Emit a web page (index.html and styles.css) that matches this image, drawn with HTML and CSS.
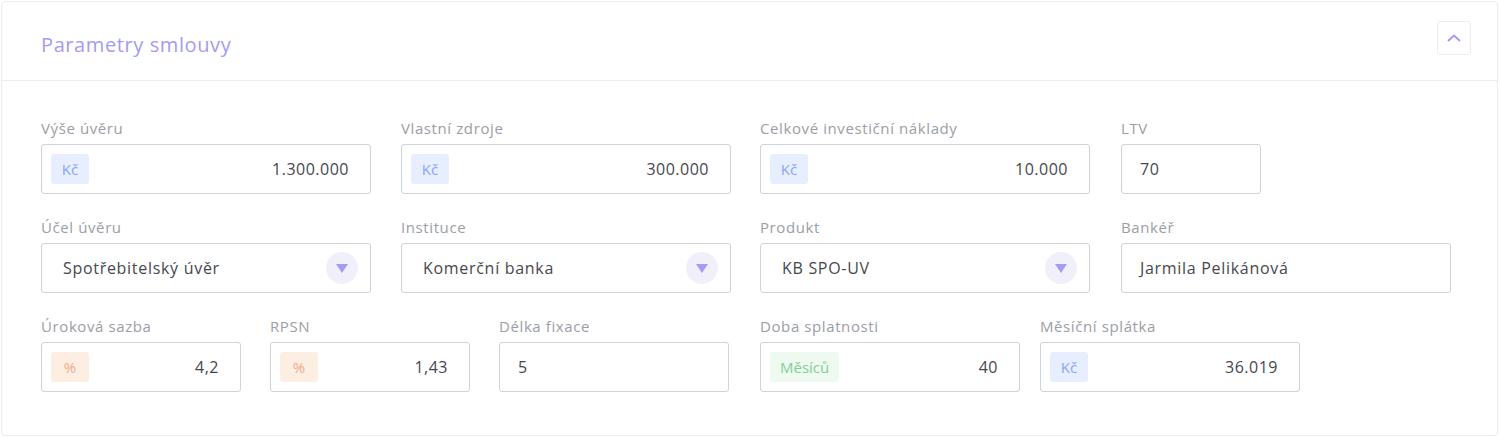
FILE: index.html
```html
<!DOCTYPE html>
<html lang="cs">
<head>
    <meta charset="UTF-8">
    <meta name="viewport" content="width=device-width, initial-scale=1.0">
    <title>Parametry smlouvy</title>
    <link rel="stylesheet" href="styles.css">
</head>
<body>
    <div class="card">
        <div class="card-head">
            <h2>Parametry smlouvy</h2>
            <button class="collapse">
                <svg width="14" height="8" viewBox="0 0 14 8"><path d="M1 7 L7 1.5 L13 7" fill="none" stroke="#a19bf3" stroke-width="2"/></svg>
            </button>
        </div>
        <div class="card-body">
            <div class="row">
                <div class="field w330">
                    <label>Výše úvěru</label>
                    <div class="input"><span class="tag blue">Kč</span><span class="value right">1.300.000</span></div>
                </div>
                <div class="field w330">
                    <label>Vlastní zdroje</label>
                    <div class="input"><span class="tag blue">Kč</span><span class="value right">300.000</span></div>
                </div>
                <div class="field w330 shift">
                    <label>Celkové investiční náklady</label>
                    <div class="input"><span class="tag blue">Kč</span><span class="value right">10.000</span></div>
                </div>
                <div class="field w140">
                    <label>LTV</label>
                    <div class="input"><span class="value">70</span></div>
                </div>
            </div>
            <div class="row">
                <div class="field w330">
                    <label>Účel úvěru</label>
                    <div class="input select"><span class="value">Spotřebitelský úvěr</span><span class="arrow"></span></div>
                </div>
                <div class="field w330">
                    <label>Instituce</label>
                    <div class="input select"><span class="value">Komerční banka</span><span class="arrow"></span></div>
                </div>
                <div class="field w330 shift">
                    <label>Produkt</label>
                    <div class="input select"><span class="value">KB SPO-UV</span><span class="arrow"></span></div>
                </div>
                <div class="field w330">
                    <label>Bankéř</label>
                    <div class="input"><span class="value">Jarmila Pelikánová</span></div>
                </div>
            </div>
            <div class="row">
                <div class="group left">
                    <div class="field w200">
                        <label>Úroková sazba</label>
                        <div class="input"><span class="tag orange">%</span><span class="value right">4,2</span></div>
                    </div>
                    <div class="field w200">
                        <label>RPSN</label>
                        <div class="input"><span class="tag orange">%</span><span class="value right">1,43</span></div>
                    </div>
                    <div class="field w230">
                        <label>Délka fixace</label>
                        <div class="input"><span class="value">5</span></div>
                    </div>
                </div>
                <div class="group">
                    <div class="field w260">
                        <label>Doba splatnosti</label>
                        <div class="input"><span class="tag green">Měsíců</span><span class="value right">40</span></div>
                    </div>
                    <div class="field w260">
                        <label>Měsíční splátka</label>
                        <div class="input"><span class="tag blue">Kč</span><span class="value right">36.019</span></div>
                    </div>
                </div>
            </div>
        </div>
    </div>
</body>
</html>
```

FILE: styles.css
```css
*{
    box-sizing: border-box;
    margin: 0;
    padding: 0;
}
body{
    background-color: #ffffff;
    font-family: "Open Sans", sans-serif;
    padding: 1px 1px 0 1px;
}
.card{
    width: 1497px;
    height: 435px;
    border: 1px solid #e9ecf4;
    border-radius: 4px;
    background-color: white;
}
.card-head{
    height: 79px;
    border-bottom: 1px solid #e9ecf4;
    display: flex;
    align-items: center;
    justify-content: space-between;
    padding: 0 26px 0 39px;
}
.card-head h2{
    font-weight: 400;
    font-size: 20px;
    color: #a29cf2;
    letter-spacing: 0.6px;
    margin-top: 6px;
}
.collapse{
    width: 34px;
    height: 34px;
    border: 1px solid #ebebf5;
    border-radius: 3px;
    background: white;
    display: flex;
    align-items: center;
    justify-content: center;
    margin-top: -6px;
}
.card-body{
    padding: 37px 39px 0 39px;
}
.row{
    display: flex;
    gap: 30px;
    margin-bottom: 23px;
}
.shift{
    margin-left: -1px;
    margin-right: 1px;
}
.group{
    display: flex;
    gap: 20px;
}
.group.left{
    gap: 29px;
    width: 689px;
}
.field label{
    display: block;
    font-size: 15px;
    line-height: 20px;
    color: #9b9ea6;
    letter-spacing: 0.6px;
    margin-bottom: 6px;
}
.w330{ width: 330px; }
.w260{ width: 260px; }
.w230{ width: 230px; }
.w200{ width: 200px; }
.w140{ width: 140px; }
.input{
    height: 50px;
    border: 1px solid #cfd3dc;
    border-radius: 3px;
    display: flex;
    align-items: center;
    padding: 0 21px 0 18px;
}
.input .value{
    font-size: 16px;
    color: #46474e;
    letter-spacing: 0.7px;
}
.input .right{
    margin-left: auto;
    letter-spacing: 0.5px;
}
.tag{
    height: 30px;
    min-width: 38px;
    padding: 0 10px;
    border-radius: 3px;
    font-size: 15px;
    line-height: 30px;
    text-align: center;
    margin-left: -9px;
}
.tag.blue{
    background-color: #e6eeff;
    color: #8ba6f6;
}
.tag.orange{
    background-color: #fdeee2;
    color: #f5a98c;
}
.tag.green{
    background-color: #eef9ef;
    color: #82d096;
}
.select{
    padding: 0 12px 0 21px;
    justify-content: space-between;
}
.arrow{
    width: 32px;
    height: 32px;
    border-radius: 50%;
    background-color: #f1f0fa;
    position: relative;
}
.arrow::after{
    content: "";
    position: absolute;
    left: 10px;
    top: 12px;
    border-left: 6px solid transparent;
    border-right: 6px solid transparent;
    border-top: 9px solid #a49cf4;
}
```
